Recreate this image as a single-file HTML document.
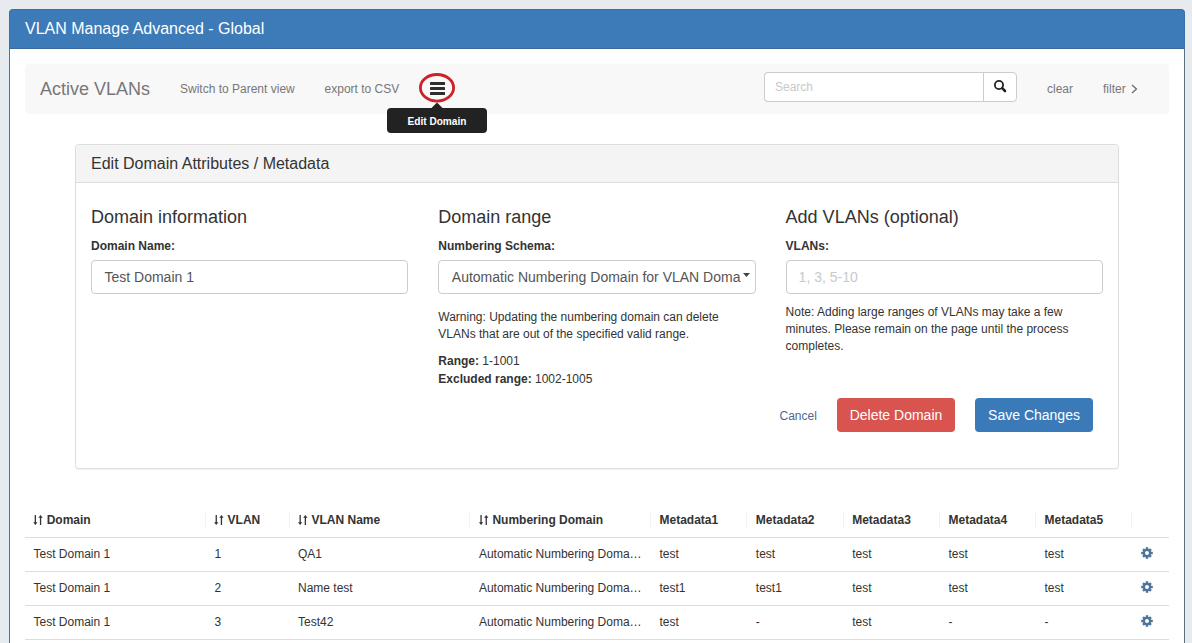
<!DOCTYPE html>
<html><head><meta charset="utf-8"><style>
*{margin:0;padding:0;box-sizing:border-box}
html,body{width:1192px;height:643px;overflow:hidden;background:#e8ebee;font-family:"Liberation Sans",sans-serif}
.t{position:absolute;white-space:pre}
.b{position:absolute}
svg{position:absolute;overflow:visible}
</style></head><body>
<div class="b" style="left:8px;top:40px;width:1178px;height:700px;border-left:1px solid #e3edf8;border-right:1px solid #e3edf8"></div>
<div class="b" style="left:9px;top:40px;width:1176px;height:700px;border:1px solid #5d6f7d;background:#fff"></div>
<div class="b" style="left:9px;top:9px;width:1176px;height:40px;background:#3d7ab8;border:1px solid #3a70a8;border-bottom:1px solid #3a6a9a;border-radius:4px 4px 0 0"></div>
<div class="t" style="left:25px;top:21.16px;font-size:16px;line-height:16px;color:#fff;font-weight:400;">VLAN Manage Advanced - Global</div>
<div class="b" style="left:25px;top:64px;width:1144px;height:50px;background:#f8f8f8;border-radius:4px"></div>
<div class="t" style="left:40px;top:79.76px;font-size:18px;line-height:18px;color:#777;font-weight:400;">Active VLANs</div>
<div class="t" style="left:180px;top:82.74px;font-size:12px;line-height:12px;color:#777;font-weight:400;">Switch to Parent view</div>
<div class="t" style="left:324.6px;top:82.74px;font-size:12px;line-height:12px;color:#777;font-weight:400;">export to CSV</div>
<div class="b" style="left:430px;top:82px;width:15px;height:3px;background:#2e2e2e;border-radius:0.5px"></div>
<div class="b" style="left:430px;top:87px;width:15px;height:3px;background:#2e2e2e;border-radius:0.5px"></div>
<div class="b" style="left:430px;top:92px;width:15px;height:3px;background:#2e2e2e;border-radius:0.5px"></div>
<svg style="left:0;top:0" width="1192" height="643"><ellipse cx="437" cy="87.8" rx="16.6" ry="13.3" fill="none" stroke="#cc2229" stroke-width="2.8"/></svg>
<svg style="left:0;top:0" width="1192" height="643"><path d="M431.5 108 L437 102.5 L442.5 108 Z" fill="#222"/></svg>
<div class="b" style="left:387px;top:108px;width:100px;height:25px;background:#222;border-radius:4px"></div>
<div class="t" style="left:387px;top:116.85px;font-size:10.1px;line-height:10.1px;color:#fff;font-weight:700;width:100px;text-align:center">Edit Domain</div>
<div class="b" style="left:764px;top:72px;width:220px;height:30px;border:1px solid #ccc;border-right:none;border-radius:4px 0 0 4px;background:#fff"></div>
<div class="t" style="left:775px;top:81.24px;font-size:12px;line-height:12px;color:#c9c9c9;font-weight:400;">Search</div>
<div class="b" style="left:983px;top:72px;width:34px;height:30px;border:1px solid #ccc;border-radius:0 4px 4px 0;background:#fff"></div>
<svg style="left:0;top:0" width="1192" height="643"><circle cx="999" cy="85" r="4.1" fill="none" stroke="#222" stroke-width="1.8"/><path d="M1002.2 88.2 L1005 91" stroke="#222" stroke-width="2.6" stroke-linecap="round"/></svg>
<div class="t" style="left:1047px;top:83.04px;font-size:12px;line-height:12px;color:#777;font-weight:400;">clear</div>
<div class="t" style="left:1103px;top:83.04px;font-size:12px;line-height:12px;color:#777;font-weight:400;">filter</div>
<svg style="left:0;top:0" width="1192" height="643"><path d="M1132 85 L1136.5 89 L1132 93" fill="none" stroke="#666" stroke-width="1.2"/></svg>
<div class="b" style="left:75px;top:144px;width:1044px;height:325px;border:1px solid #ddd;border-radius:3.5px;background:#fff;box-shadow:0 1px 1px rgba(0,0,0,.05)"></div>
<div class="b" style="left:76px;top:145px;width:1042px;height:38px;background:#f4f4f4;border-bottom:1px solid #ddd;border-radius:3px 3px 0 0"></div>
<div class="t" style="left:91px;top:155.86px;font-size:16px;line-height:16px;color:#333;font-weight:400;">Edit Domain Attributes / Metadata</div>
<div class="t" style="left:91px;top:207.76px;font-size:18px;line-height:18px;color:#333;font-weight:400;">Domain information</div>
<div class="t" style="left:438.3px;top:207.76px;font-size:18px;line-height:18px;color:#333;font-weight:400;">Domain range</div>
<div class="t" style="left:785.6px;top:207.76px;font-size:18px;line-height:18px;color:#333;font-weight:400;">Add VLANs (optional)</div>
<div class="t" style="left:91px;top:239.64px;font-size:12px;line-height:12px;color:#333;font-weight:700;">Domain Name:</div>
<div class="t" style="left:438.3px;top:239.64px;font-size:12px;line-height:12px;color:#333;font-weight:700;">Numbering Schema:</div>
<div class="t" style="left:785.6px;top:239.64px;font-size:12px;line-height:12px;color:#333;font-weight:700;">VLANs:</div>
<div class="b" style="left:91px;top:260px;width:317.3px;height:34px;border:1px solid #ccc;border-radius:4px;background:#fff"></div>
<div class="b" style="left:438.3px;top:260px;width:317.3px;height:34px;border:1px solid #ccc;border-radius:4px;background:#fff"></div>
<div class="b" style="left:785.6px;top:260px;width:317.3px;height:34px;border:1px solid #ccc;border-radius:4px;background:#fff"></div>
<div class="t" style="left:104.5px;top:269.85px;font-size:14px;line-height:14px;color:#555;font-weight:400;">Test Domain 1</div>
<div class="t" style="left:451.8px;top:269.85px;font-size:14px;line-height:14px;color:#555;font-weight:400;width:289px;overflow:hidden;padding-bottom:5px">Automatic Numbering Domain for VLAN Doma</div>
<svg style="left:0;top:0" width="1192" height="643"><path d="M743 273 L750 273 L746.5 277 Z" fill="#444"/></svg>
<div class="t" style="left:798.6px;top:270.05px;font-size:14px;line-height:14px;color:#c9c9c9;font-weight:400;">1, 3, 5-10</div>
<div class="t" style="left:438.3px;top:311.24px;font-size:12px;line-height:12px;color:#333;font-weight:400;">Warning: Updating the numbering domain can delete</div>
<div class="t" style="left:438.3px;top:327.64px;font-size:12px;line-height:12px;color:#333;font-weight:400;">VLANs that are out of the specified valid range.</div>
<div class="t" style="left:438.3px;top:354.84px;font-size:12px;line-height:12px;color:#333;font-weight:400;"><b>Range:</b> 1-1001</div>
<div class="t" style="left:438.3px;top:373.14px;font-size:12px;line-height:12px;color:#333;font-weight:400;"><b>Excluded range:</b> 1002-1005</div>
<div class="t" style="left:785.6px;top:306.44px;font-size:12px;line-height:12px;color:#333;font-weight:400;">Note: Adding large ranges of VLANs may take a few</div>
<div class="t" style="left:785.6px;top:323.04px;font-size:12px;line-height:12px;color:#333;font-weight:400;">minutes. Please remain on the page until the process</div>
<div class="t" style="left:785.6px;top:339.84px;font-size:12px;line-height:12px;color:#333;font-weight:400;">completes.</div>
<div class="t" style="left:779.5px;top:409.74px;font-size:12px;line-height:12px;color:#486d92;font-weight:400;">Cancel</div>
<div class="b" style="left:837px;top:398px;width:118px;height:34px;background:#d9534f;border-radius:4px"></div>
<div class="t" style="left:837px;top:408.05px;font-size:14px;line-height:14px;color:#fff;font-weight:400;width:118px;text-align:center">Delete Domain</div>
<div class="b" style="left:975px;top:398px;width:118px;height:34px;background:#3a7ab9;border-radius:4px"></div>
<div class="t" style="left:975px;top:408.05px;font-size:14px;line-height:14px;color:#fff;font-weight:400;width:118px;text-align:center">Save Changes</div>
<svg style="left:0;top:0" width="1192" height="643"><g fill="#333"><rect x="34.7" y="515" width="1.3" height="8"/><path d="M33.2 522.2 L37.5 522.2 L35.35 525 Z"/><rect x="39.900000000000006" y="517" width="1.3" height="8"/><path d="M38.400000000000006 517.8 L42.7 517.8 L40.550000000000004 515 Z"/></g></svg>
<div class="t" style="left:46.7px;top:513.84px;font-size:12px;line-height:12px;color:#333;font-weight:700;">Domain</div>
<svg style="left:0;top:0" width="1192" height="643"><g fill="#333"><rect x="215.6" y="515" width="1.3" height="8"/><path d="M214.1 522.2 L218.4 522.2 L216.25 525 Z"/><rect x="220.79999999999998" y="517" width="1.3" height="8"/><path d="M219.29999999999998 517.8 L223.6 517.8 L221.45 515 Z"/></g></svg>
<div class="t" style="left:227.6px;top:513.84px;font-size:12px;line-height:12px;color:#333;font-weight:700;">VLAN</div>
<svg style="left:0;top:0" width="1192" height="643"><g fill="#333"><rect x="299.5" y="515" width="1.3" height="8"/><path d="M298.0 522.2 L302.3 522.2 L300.15 525 Z"/><rect x="304.7" y="517" width="1.3" height="8"/><path d="M303.2 517.8 L307.5 517.8 L305.35 515 Z"/></g></svg>
<div class="t" style="left:311.5px;top:513.84px;font-size:12px;line-height:12px;color:#333;font-weight:700;">VLAN Name</div>
<svg style="left:0;top:0" width="1192" height="643"><g fill="#333"><rect x="480.4" y="515" width="1.3" height="8"/><path d="M478.9 522.2 L483.2 522.2 L481.04999999999995 525 Z"/><rect x="485.59999999999997" y="517" width="1.3" height="8"/><path d="M484.09999999999997 517.8 L488.4 517.8 L486.25 515 Z"/></g></svg>
<div class="t" style="left:492.4px;top:513.84px;font-size:12px;line-height:12px;color:#333;font-weight:700;">Numbering Domain</div>
<div class="t" style="left:659.5px;top:513.84px;font-size:12px;line-height:12px;color:#333;font-weight:700;">Metadata1</div>
<div class="t" style="left:755.8px;top:513.84px;font-size:12px;line-height:12px;color:#333;font-weight:700;">Metadata2</div>
<div class="t" style="left:852.2px;top:513.84px;font-size:12px;line-height:12px;color:#333;font-weight:700;">Metadata3</div>
<div class="t" style="left:948.5px;top:513.84px;font-size:12px;line-height:12px;color:#333;font-weight:700;">Metadata4</div>
<div class="t" style="left:1044.5px;top:513.84px;font-size:12px;line-height:12px;color:#333;font-weight:700;">Metadata5</div>
<div class="b" style="left:205px;top:512px;width:1px;height:16px;background:#f2f2f2"></div>
<div class="b" style="left:289px;top:512px;width:1px;height:16px;background:#f2f2f2"></div>
<div class="b" style="left:469px;top:512px;width:1px;height:16px;background:#f2f2f2"></div>
<div class="b" style="left:650px;top:512px;width:1px;height:16px;background:#f2f2f2"></div>
<div class="b" style="left:746px;top:512px;width:1px;height:16px;background:#f2f2f2"></div>
<div class="b" style="left:843px;top:512px;width:1px;height:16px;background:#f2f2f2"></div>
<div class="b" style="left:939px;top:512px;width:1px;height:16px;background:#f2f2f2"></div>
<div class="b" style="left:1035px;top:512px;width:1px;height:16px;background:#f2f2f2"></div>
<div class="b" style="left:1131px;top:512px;width:1px;height:16px;background:#f2f2f2"></div>
<div class="b" style="left:25px;top:537px;width:1144px;height:1px;background:#dddddd"></div>
<div class="b" style="left:25px;top:571px;width:1144px;height:1px;background:#dddddd"></div>
<div class="b" style="left:25px;top:605px;width:1144px;height:1px;background:#dddddd"></div>
<div class="b" style="left:25px;top:639px;width:1144px;height:1px;background:#dddddd"></div>
<div class="t" style="left:33.5px;top:547.54px;font-size:12px;line-height:12px;color:#333;font-weight:400;">Test Domain 1</div>
<div class="t" style="left:214.5px;top:547.54px;font-size:12px;line-height:12px;color:#333;font-weight:400;">1</div>
<div class="t" style="left:298px;top:547.54px;font-size:12px;line-height:12px;color:#333;font-weight:400;">QA1</div>
<div class="t" style="left:478.9px;top:547.54px;font-size:12px;line-height:12px;color:#333;font-weight:400;">Automatic Numbering Doma&#8230;</div>
<div class="t" style="left:659.5px;top:547.54px;font-size:12px;line-height:12px;color:#333;font-weight:400;">test</div>
<div class="t" style="left:755.8px;top:547.54px;font-size:12px;line-height:12px;color:#333;font-weight:400;">test</div>
<div class="t" style="left:852.2px;top:547.54px;font-size:12px;line-height:12px;color:#333;font-weight:400;">test</div>
<div class="t" style="left:948.5px;top:547.54px;font-size:12px;line-height:12px;color:#333;font-weight:400;">test</div>
<div class="t" style="left:1044.5px;top:547.54px;font-size:12px;line-height:12px;color:#333;font-weight:400;">test</div>
<svg style="left:1141px;top:546.8px" width="12" height="12" viewBox="-6 -6 12 12"><g fill="#4d749b"><path fill-rule="evenodd" d="M-4.2 0 A4.2 4.2 0 1 0 4.2 0 A4.2 4.2 0 1 0 -4.2 0 Z M-2 0 A2 2 0 1 1 2 0 A2 2 0 1 1 -2 0 Z"/><rect x="-1.2" y="-5.8" width="2.4" height="11.6"/><rect x="-5.8" y="-1.2" width="11.6" height="2.4"/><rect x="-1.2" y="-5.6" width="2.4" height="11.2" transform="rotate(45)"/><rect x="-1.2" y="-5.6" width="2.4" height="11.2" transform="rotate(-45)"/><circle r="2" fill="#fff"/></g></svg>
<div class="t" style="left:33.5px;top:581.54px;font-size:12px;line-height:12px;color:#333;font-weight:400;">Test Domain 1</div>
<div class="t" style="left:214.5px;top:581.54px;font-size:12px;line-height:12px;color:#333;font-weight:400;">2</div>
<div class="t" style="left:298px;top:581.54px;font-size:12px;line-height:12px;color:#333;font-weight:400;">Name test</div>
<div class="t" style="left:478.9px;top:581.54px;font-size:12px;line-height:12px;color:#333;font-weight:400;">Automatic Numbering Doma&#8230;</div>
<div class="t" style="left:659.5px;top:581.54px;font-size:12px;line-height:12px;color:#333;font-weight:400;">test1</div>
<div class="t" style="left:755.8px;top:581.54px;font-size:12px;line-height:12px;color:#333;font-weight:400;">test1</div>
<div class="t" style="left:852.2px;top:581.54px;font-size:12px;line-height:12px;color:#333;font-weight:400;">test</div>
<div class="t" style="left:948.5px;top:581.54px;font-size:12px;line-height:12px;color:#333;font-weight:400;">test</div>
<div class="t" style="left:1044.5px;top:581.54px;font-size:12px;line-height:12px;color:#333;font-weight:400;">test</div>
<svg style="left:1141px;top:580.8px" width="12" height="12" viewBox="-6 -6 12 12"><g fill="#4d749b"><path fill-rule="evenodd" d="M-4.2 0 A4.2 4.2 0 1 0 4.2 0 A4.2 4.2 0 1 0 -4.2 0 Z M-2 0 A2 2 0 1 1 2 0 A2 2 0 1 1 -2 0 Z"/><rect x="-1.2" y="-5.8" width="2.4" height="11.6"/><rect x="-5.8" y="-1.2" width="11.6" height="2.4"/><rect x="-1.2" y="-5.6" width="2.4" height="11.2" transform="rotate(45)"/><rect x="-1.2" y="-5.6" width="2.4" height="11.2" transform="rotate(-45)"/><circle r="2" fill="#fff"/></g></svg>
<div class="t" style="left:33.5px;top:615.54px;font-size:12px;line-height:12px;color:#333;font-weight:400;">Test Domain 1</div>
<div class="t" style="left:214.5px;top:615.54px;font-size:12px;line-height:12px;color:#333;font-weight:400;">3</div>
<div class="t" style="left:298px;top:615.54px;font-size:12px;line-height:12px;color:#333;font-weight:400;">Test42</div>
<div class="t" style="left:478.9px;top:615.54px;font-size:12px;line-height:12px;color:#333;font-weight:400;">Automatic Numbering Doma&#8230;</div>
<div class="t" style="left:659.5px;top:615.54px;font-size:12px;line-height:12px;color:#333;font-weight:400;">test</div>
<div class="t" style="left:755.8px;top:615.54px;font-size:12px;line-height:12px;color:#333;font-weight:400;">-</div>
<div class="t" style="left:852.2px;top:615.54px;font-size:12px;line-height:12px;color:#333;font-weight:400;">test</div>
<div class="t" style="left:948.5px;top:615.54px;font-size:12px;line-height:12px;color:#333;font-weight:400;">-</div>
<div class="t" style="left:1044.5px;top:615.54px;font-size:12px;line-height:12px;color:#333;font-weight:400;">-</div>
<svg style="left:1141px;top:614.8px" width="12" height="12" viewBox="-6 -6 12 12"><g fill="#4d749b"><path fill-rule="evenodd" d="M-4.2 0 A4.2 4.2 0 1 0 4.2 0 A4.2 4.2 0 1 0 -4.2 0 Z M-2 0 A2 2 0 1 1 2 0 A2 2 0 1 1 -2 0 Z"/><rect x="-1.2" y="-5.8" width="2.4" height="11.6"/><rect x="-5.8" y="-1.2" width="11.6" height="2.4"/><rect x="-1.2" y="-5.6" width="2.4" height="11.2" transform="rotate(45)"/><rect x="-1.2" y="-5.6" width="2.4" height="11.2" transform="rotate(-45)"/><circle r="2" fill="#fff"/></g></svg>
</body></html>
